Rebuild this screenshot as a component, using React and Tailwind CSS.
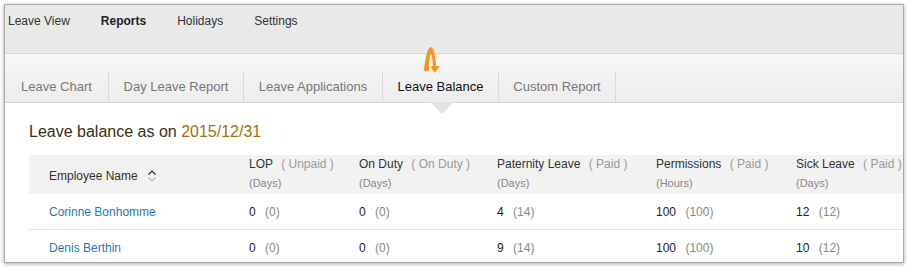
import React from 'react';

const tabs = [
  { label: 'Leave Chart', w: 'w-[104px]' },
  { label: 'Day Leave Report', w: 'w-[135px]' },
  { label: 'Leave Applications', w: 'w-[139px]' },
  { label: 'Leave Balance', w: 'w-[116px]', active: true },
  { label: 'Custom Report', w: 'w-[117px]' },
];

const columns = [
  { name: 'LOP', kind: 'Unpaid', unit: 'Days' },
  { name: 'On Duty', kind: 'On Duty', unit: 'Days' },
  { name: 'Paternity Leave', kind: 'Paid', unit: 'Days' },
  { name: 'Permissions', kind: 'Paid', unit: 'Hours' },
  { name: 'Sick Leave', kind: 'Paid', unit: 'Days' },
];

const rows = [
  { name: 'Corinne Bonhomme', values: [['0', '0'], ['0', '0'], ['4', '14'], ['100', '100'], ['12', '12']] },
  { name: 'Denis Berthin', values: [['0', '0'], ['0', '0'], ['9', '14'], ['100', '100'], ['10', '12']] },
];

const grid = 'grid grid-cols-[220px_110px_138px_159px_140px_1fr]';

function SortIcon() {
  return (
    <svg width="10" height="14" viewBox="0 0 10 14" className="ml-[9px]">
      <path d="M1.5 5.5 L5 2 L8.5 5.5" fill="none" stroke="#222" strokeWidth="1.1" />
      <path d="M1.5 8.5 L5 12 L8.5 8.5" fill="none" stroke="#b5b5b5" strokeWidth="1.1" />
    </svg>
  );
}

function Arrow() {
  return (
    <svg width="17" height="27" viewBox="0 0 17 27" className="absolute left-[41px] top-[-25px]">
      <path
        d="M0 24 C1 12 3 1 7 0 C10 0 11.5 10 12 19 L16 19 L10.5 26 L6.5 19 L9 19 C8.7 13 8 7.5 7 7.5 C5.8 7.5 5 15 5 24 Z"
        fill="#f7941d"
      />
    </svg>
  );
}

export default function App() {
  return (
    <div className="min-h-screen bg-white pt-[4px] pl-[4px] font-['Liberation_Sans',Arial,sans-serif]">
      <div className="w-[900px] h-[259px] border border-[#a9a9a9] shadow-[0_1px_4px_rgba(0,0,0,0.35)] bg-white overflow-hidden">
        <nav className="h-[49px] bg-[#e9e9e9] border-b border-[#d9d9d9] flex gap-[31px] pl-[3px] pt-[8px] text-[12px] leading-[16px] text-[#333]">
          <span>Leave View</span>
          <span className="font-bold text-[#222]">Reports</span>
          <span>Holidays</span>
          <span>Settings</span>
        </nav>

        <div className="h-[49px] bg-gradient-to-b from-[#f7f7f7] to-[#ededed] border-b border-[#d6d6d6] flex items-end">
          {tabs.map((t) => (
            <div
              key={t.label}
              className={`${t.w} h-[30px] relative flex items-center justify-center text-[13px] border-r border-[#dadada] ${
                t.active ? 'text-[#111]' : 'text-[#777]'
              }`}
            >
              {t.label}
              {t.active && (
                <>
                  <Arrow />
                  <span className="absolute left-[47px] top-[30px] w-0 h-0 border-l-[12px] border-r-[12px] border-t-[12px] border-l-transparent border-r-transparent border-t-[#e3e3e3]" />
                </>
              )}
            </div>
          ))}
        </div>

        <h2 className="ml-[24px] mt-[19px] text-[16px] leading-[20px] text-[#3a2f12]">
          Leave balance as on <span className="text-[#a86b0e]">2015/12/31</span>
        </h2>

        <div className="ml-[24px] mt-[13px]">
          <div className={`${grid} h-[39px] bg-[#f2f2f2]`}>
            <div className="pl-[20px] pt-[3px] flex items-center text-[12px] text-[#333]">
              Employee Name <SortIcon />
            </div>
            {columns.map((c) => (
              <div key={c.name}>
                <div className="text-[12px] leading-[18px] text-[#333] whitespace-nowrap">
                  {c.name} <span className="ml-[5px] text-[#999]">( {c.kind} )</span>
                </div>
                <div className="mt-[1px] text-[11px] leading-[18px] text-[#888]">({c.unit})</div>
              </div>
            ))}
          </div>

          {rows.map((r) => (
            <div key={r.name} className={`${grid} h-[36px] items-center border-b border-[#e3e3e3] text-[12px]`}>
              <div className="pl-[20px] text-[#2a78b0]">{r.name}</div>
              {r.values.map(([v, total], i) => (
                <div key={i} className="text-[#222]">
                  {v} <span className="ml-[6px] text-[#888]">({total})</span>
                </div>
              ))}
            </div>
          ))}
        </div>
      </div>
    </div>
  );
}
